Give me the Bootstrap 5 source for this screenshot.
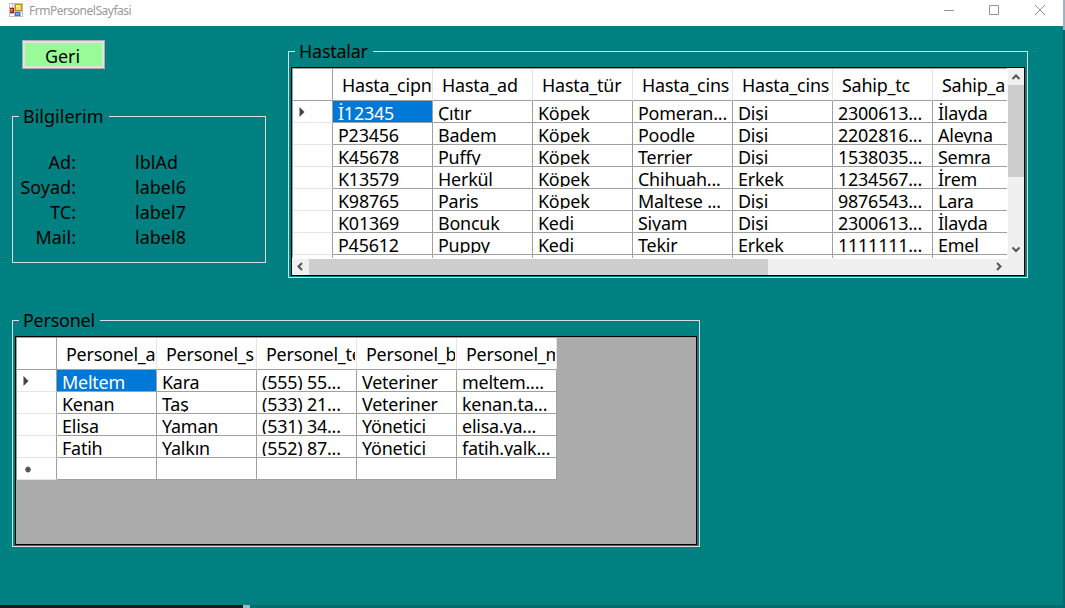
<!DOCTYPE html>
<html lang="tr">
<head>
<meta charset="utf-8">
<title>FrmPersonelSayfasi</title>
<link href="https://cdn.jsdelivr.net/npm/bootstrap@5.3.0/dist/css/bootstrap.min.css" rel="stylesheet">
<style>
body{width:1065px;height:608px;background:teal;color:#000;font:17.9px/25px "Noto Sans","Open Sans",sans-serif;letter-spacing:-.2px}
.titlebar{height:26px;padding-left:9px;font-size:12px;line-height:22px;color:#999;letter-spacing:-.48px}
.titlebar .app-name{margin-left:6px}
.client{height:579px;padding-left:12px}
.upper{height:252px}
.left-col{width:276px}
.back-btn{width:83px;height:29px;margin:14px 0 0 10px;border:1px solid #adadad;border-radius:0;padding:0 2px 0 0;background:#98fb98;box-shadow:inset 0 0 0 2px #e1e1e1;font:inherit;line-height:30px;letter-spacing:0;color:#000}
.group{border:1px solid #dcdcdc;min-width:0}
.group>legend{float:none;width:auto;height:25px;margin:0 0 0 6px;padding:0 5px 0 4px;font-size:inherit;line-height:25px}
.g-info{width:254px;height:159px;margin-top:35px;letter-spacing:.06px}
.info-list{margin-top:21px;display:grid;grid-template-columns:63px 1fr;column-gap:59px;line-height:25px}
.g-hasta{width:740px;height:239px;margin-top:13px}
.g-personel{width:688px;height:239px;margin-top:30px}
.dgv{height:209px;margin:3px 2px 0 2px;border:1px solid #000;background:#ababab}
.view{border-top:1px solid #a0a0a0;border-left:1px solid #a0a0a0}
.grow{height:22px}
.grow>div{width:100px;height:22px;flex:none;background:#fff;border-right:1px solid #a0a0a0;border-bottom:1px solid #a0a0a0;padding:0 0 1px 5px;line-height:24px}
.grow>div.rh{width:40px;padding:0;border-bottom-color:#e5e5e5;line-height:0}
.grow>div>span{display:block;height:20px;overflow:hidden;white-space:nowrap}
.grow>div.sel{background:#0078d7;color:#fff}
.grow.head,.grow.head>div{height:32px}
.grow.head>div{line-height:32px;padding-left:9px;padding-right:1px;border-right-color:#e5e5e5}
.grow.head>div.rh{border-color:#a0a0a0}
.grow.head>div>span{height:31px}
.viewport{width:715px;height:190px}
.hbar{height:16px;background:#f0f0f0}
.vbar{width:16px;height:191px;background:#f0f0f0}
.hbar .thumb{width:459px;height:16px;background:#cdcdcd}
.vbar .thumb{width:16px;height:92px;background:#cdcdcd}
.bottom-edge{height:3px;background:#006c6c}
.bottom-edge i{height:3px}
.right-edge{position:absolute;right:0;top:0;width:2px;height:605px;background:linear-gradient(#a3b0bf 30px,#006a6c 30px)}
svg{display:block;flex:none}
</style>
</head>
<body class="overflow-hidden position-relative">
<header class="titlebar bg-white d-flex">
  <svg width="14" height="14" viewBox="0 0 14 14" style="margin-top:3px" shape-rendering="crispEdges">
    <path fill="#bdbdbd" d="M0 0h14v14H0z"/><path fill="#fff" d="M1 1h2v3H1zM4 1h1v3H4zM1 11h4v2H1zM12 9h1v4h-1z"/>
    <path fill="#c09010" d="M6 1h7v7H6z"/><path fill="#ffd95a" d="M7 2h5v5H7z"/><path fill="#fff0ae" d="M7 2h3v2H7z"/>
    <path fill="#a81c14" d="M1 5h4v5H1z"/><path fill="#df4a3a" d="M1 6h3v3H1z"/><path fill="#fff" d="M2 6h1v1H2z"/>
    <path fill="#3d70cf" d="M6 9h5v4H6z"/><path fill="#78a9f5" d="M7 10h3v2H7z"/>
  </svg>
  <span class="app-name">FrmPersonelSayfasi</span>
  <svg class="ms-auto" width="121" height="26" viewBox="944 0 121 26" fill="none" stroke="#929292">
    <path d="M944 10.5h10M989.5 5.5h9v9h-9z"/><path d="M1035 5l10 10M1045 5l-10 10"/>
  </svg>
</header>
<main class="client">
  <div class="upper d-flex">
    <div class="left-col">
      <button class="btn back-btn d-block">Geri</button>
      <fieldset class="group g-info">
        <legend>Bilgilerim</legend>
        <div class="info-list">
          <div class="text-end">Ad:</div><div>lblAd</div>
          <div class="text-end">Soyad:</div><div>label6</div>
          <div class="text-end">TC:</div><div>label7</div>
          <div class="text-end">Mail:</div><div>label8</div>
        </div>
      </fieldset>
    </div>
    <fieldset class="group g-hasta">
      <legend>Hastalar</legend>
      <div class="dgv">
        <div class="d-flex bg-white">
          <div class="viewport view overflow-hidden bg-white" id="hastalar"></div>
          <div class="vbar ms-auto">
            <svg width="16" height="17" fill="none" stroke="#555" stroke-width="2"><path d="M4.5 11L8 7.5 11.5 11"/></svg>
            <div class="thumb"></div>
            <svg width="16" height="82" fill="none" stroke="#555" stroke-width="2"><path d="M4.5 70.5L8 74 11.5 70.5"/></svg>
          </div>
        </div>
        <div class="hbar d-flex">
          <svg width="17" height="16" fill="none" stroke="#555" stroke-width="2"><path d="M10 4L6.5 7.500 10 11"/></svg>
          <div class="thumb"></div>
          <svg width="256" height="16" fill="none" stroke="#555" stroke-width="2"><path d="M229 4L232.500 7.500 229 11"/></svg>
        </div>
      </div>
    </fieldset>
  </div>
  <fieldset class="group g-personel">
    <legend>Personel</legend>
    <div class="dgv"><div class="view" id="personel"></div></div>
  </fieldset>
</main>
<footer class="bottom-edge d-flex"><i style="width:243px;background:#151b1b"></i><i style="width:7px;background:#a9b5c4"></i></footer>
<div class="right-edge"></div>
<script src="https://cdn.jsdelivr.net/npm/bootstrap@5.3.0/dist/js/bootstrap.bundle.min.js"></script>
<script>
const arrow = '<svg width="39" height="21"><path fill="#444" d="M6.500 6v10l5-5z"/></svg>';
const star = '<svg width="39" height="21"><path stroke="#555" stroke-width="1.5" d="M11 8.500v6M8 11.500h6M9 9.500l4 4M13 9.500l-4 4"/></svg>';
function fill(id, head, rows) {
  const cell = (t, c) => `<div class="${c}"><span>${t}</span></div>`;
  let html = '<div class="grow head d-flex"><div class="rh"></div>' + head.map(t => cell(t, '')).join('') + '</div>';
  rows.forEach((r, i) => {
    const mark = i === 0 ? arrow : r.every(t => t === '') ? star : '';
    html += `<div class="grow d-flex"><div class="rh">${mark}</div>` + r.map((t, j) => cell(t, i + j === 0 ? 'sel' : '')).join('') + '</div>';
  });
  document.getElementById(id).innerHTML = html;
}
fill('hastalar', ['Hasta_cipn','Hasta_ad','Hasta_tür','Hasta_cins','Hasta_cins','Sahip_tc','Sahip_a'], [
  ['İ12345','Çıtır','Köpek','Pomeran...','Dişi','2300613...','İlayda'],
  ['P23456','Badem','Köpek','Poodle','Dişi','2202816...','Aleyna'],
  ['K45678','Puffy','Köpek','Terrier','Dişi','1538035...','Semra'],
  ['K13579','Herkül','Köpek','Chihuah...','Erkek','1234567...','İrem'],
  ['K98765','Paris','Köpek','Maltese ...','Dişi','9876543...','Lara'],
  ['K01369','Boncuk','Kedi','Siyam','Dişi','2300613...','İlayda'],
  ['P45612','Puppy','Kedi','Tekir','Erkek','1111111...','Emel'],
  [' ',' ',' ',' ',' ',' ',' ']
]);
fill('personel', ['Personel_a','Personel_s','Personel_te','Personel_b','Personel_m'], [
  ['Meltem','Kara','(555) 55...','Veteriner','meltem....'],
  ['Kenan','Taş','(533) 21...','Veteriner','kenan.ta...'],
  ['Elisa','Yaman','(531) 34...','Yönetici','elisa.ya...'],
  ['Fatih','Yalkın','(552) 87...','Yönetici','fatih.yalk...'],
  ['','','','','']
]);
</script>
</body>
</html>
